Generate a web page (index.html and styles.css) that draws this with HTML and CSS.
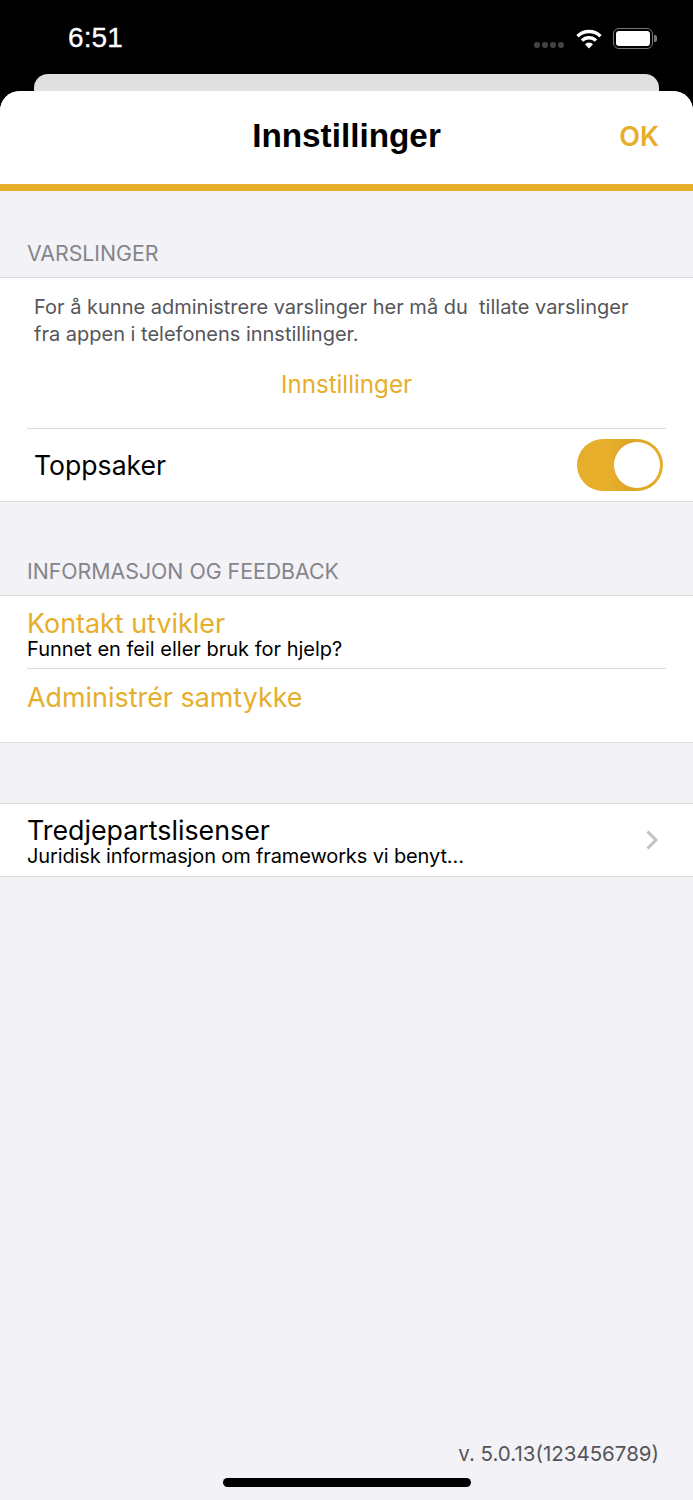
FILE: index.html
```html
<!DOCTYPE html>
<html lang="no">
<head>
<meta charset="utf-8">
<title>Innstillinger</title>
<link rel="stylesheet" href="styles.css">
</head>
<body>
<div class="screen">
  <header class="status">
    <span class="time">6:51</span>
    <div class="status-icons">
      <div class="dots"><i></i><i></i><i></i><i></i></div>
      <svg class="wifi" width="26" height="20" viewBox="0 0 26 20"><path d="M1.5 7.2A16.5 16.5 0 0 1 24.5 7.2" fill="none" stroke="#fff" stroke-width="3.4"/><path d="M6 11.6A10 10 0 0 1 20 11.6" fill="none" stroke="#fff" stroke-width="3.4"/><path d="M13 19.5 9 15.3A5.6 5.6 0 0 1 17 15.3Z" fill="#fff"/></svg>
      <div class="battery"><div class="battery-body"><div class="battery-fill"></div></div><div class="battery-cap"></div></div>
    </div>
  </header>
  <div class="back-card-wrap"><div class="back-card"></div></div>
  <main class="sheet">
    <div class="nav">
      <h1 class="title">Innstillinger</h1>
      <span class="ok">OK</span>
    </div>
    <section class="content">
      <div class="label label-first">VARSLINGER</div>
      <div class="group">
        <p class="notice">For å kunne administrere varslinger her må du&nbsp; tillate varslinger fra appen i telefonens innstillinger.</p>
        <div class="settings-link">Innstillinger</div>
        <div class="toggle-row">
          <span class="toggle-label">Toppsaker</span>
          <div class="switch"><div class="knob"></div></div>
        </div>
      </div>
      <div class="label label-info">INFORMASJON OG FEEDBACK</div>
      <div class="group">
        <div class="row row-contact">
          <div class="row-title gold">Kontakt utvikler</div>
          <div class="row-sub">Funnet en feil eller bruk for hjelp?</div>
        </div>
        <div class="row row-consent">
          <div class="row-title gold">Administrér samtykke</div>
        </div>
      </div>
      <div class="group group-licenses">
        <div class="row-license">
          <div class="license-text">
            <div class="row-title">Tredjepartslisenser</div>
            <div class="row-sub">Juridisk informasjon om frameworks vi benyt…</div>
          </div>
          <svg class="chevron" width="14" height="22" viewBox="0 0 14 22"><path d="M2.5 2.5 11 11 2.5 19.5" fill="none" stroke="#c4c4c7" stroke-width="3"/></svg>
        </div>
      </div>
      <div class="version">v. 5.0.13(123456789)</div>
    </section>
  </main>
  <div class="home-indicator"></div>
</div>
</body>
</html>
```
FILE: styles.css
```css
* { box-sizing: border-box; }
html, body { margin: 0; padding: 0; }
body { background: #000; font-family: Inter, "Liberation Sans", sans-serif; }
.screen { position: relative; width: 693px; height: 1500px; display: flex; flex-direction: column; overflow: hidden; background: #000; }
.status { height: 74px; flex: none; display: flex; justify-content: space-between; align-items: flex-start; padding: 21px 36px 0 68px; color: #fff; }
.time { font-family: "Liberation Sans", sans-serif; font-size: 28px; line-height: 34px; letter-spacing: .1px; font-weight: 400; -webkit-text-stroke: .3px #fff; }
.status-icons { display: flex; align-items: flex-start; }
.dots { display: flex; gap: 2px; margin-top: 21px; margin-right: 12px; }
.dots i { width: 6px; height: 6px; border-radius: 50%; background: #444; display: block; }
.wifi { margin-top: 8px; margin-right: 11px; }
.battery { display: flex; align-items: center; margin-top: 7px; }
.battery-body { width: 40px; height: 21px; border: 1.5px solid #777; border-radius: 6px; padding: 2px; }
.battery-fill { width: 100%; height: 100%; background: #fff; border-radius: 3px; }
.battery-cap { width: 3px; height: 7px; background: #777; border-radius: 0 2px 2px 0; margin-left: 1px; }
.back-card-wrap { height: 17px; flex: none; padding: 0 34px; }
.back-card { height: 30px; background: #e0e0e0; border-radius: 14px 14px 0 0; }
.sheet { position: relative; flex: 1; display: flex; flex-direction: column; background: #f2f2f7; border-radius: 20px 20px 0 0; overflow: hidden; }
.nav { height: 100px; flex: none; background: #fff; border-bottom: 7px solid #e6ae2b; display: flex; align-items: center; justify-content: center; position: relative; padding-bottom: 4px; }
.title { margin: 0; font-family: "Liberation Sans", sans-serif; font-size: 33.3px; font-weight: 700; line-height: 40px; color: #000; }
.ok { position: absolute; right: 34px; top: 28px; font-size: 27px; font-weight: 600; line-height: 36px; color: #e6ae2b; }
.content { flex: 1; display: flex; flex-direction: column; }
.label { font-size: 21.3px; line-height: 24px; color: #85858b; padding-left: 27px; }
.label-first { margin-top: 50px; margin-bottom: 12px; }
.label-info { margin-top: 57px; margin-bottom: 12px; }
.group { background: #fff; border-top: 1px solid #dcdcdf; border-bottom: 1px solid #dcdcdf; }
.notice { margin: 0; padding: 16px 40px 0 34px; font-size: 20px; line-height: 27px; color: #55555a; }
.settings-link { text-align: center; color: #e6ae2b; font-size: 24.1px; line-height: 28px; margin-top: 23px; margin-bottom: 29px; }
.toggle-row { margin-left: 27px; margin-right: 27px; height: 73px; border-top: 1px solid #dcdcdf; display: flex; align-items: center; justify-content: space-between; padding-left: 7px; }
.toggle-label { font-size: 26.6px; line-height: 32px; color: #000; }
.switch { width: 86px; height: 52px; margin-right: 3px; border-radius: 26px; background: linear-gradient(90deg, #e6ae2b 40%, #dfa626 60%, #e6ae2b); padding: 3px; display: flex; justify-content: flex-end; }
.knob { width: 46px; height: 46px; border-radius: 50%; background: #fff; }
.gold { color: #e6ae2b; }
.row { margin-left: 27px; }
.row-contact { height: 73px; padding-top: 11px; border-bottom: 1px solid #dcdcdf; margin-right: 27px; margin-left: 27px; }
.row-consent { height: 73px; padding-top: 12px; }
.row-title { font-size: 26.8px; line-height: 32px; color: #000; }
.row-title.gold { font-size: 26.9px; color: #e6ae2b; }
.row-sub { font-size: 20px; line-height: 20px; color: #000; margin-top: 0; }
.group-licenses { margin-top: 60px; }
.row-license { height: 72px; padding: 10px 34px 0 27px; display: flex; justify-content: space-between; align-items: flex-start; }
.license-text .row-title { line-height: 33px; }
.license-text .row-sub { margin-top: -1px; letter-spacing: -.13px; }
.chevron { margin-top: 15px; }
.version { margin-top: auto; margin-bottom: 33px; text-align: right; padding-right: 34px; font-size: 20.5px; line-height: 26px; color: #55555a; }
.home-indicator { position: absolute; left: 223px; bottom: 13px; width: 248px; height: 9px; border-radius: 5px; background: #000; }
```
